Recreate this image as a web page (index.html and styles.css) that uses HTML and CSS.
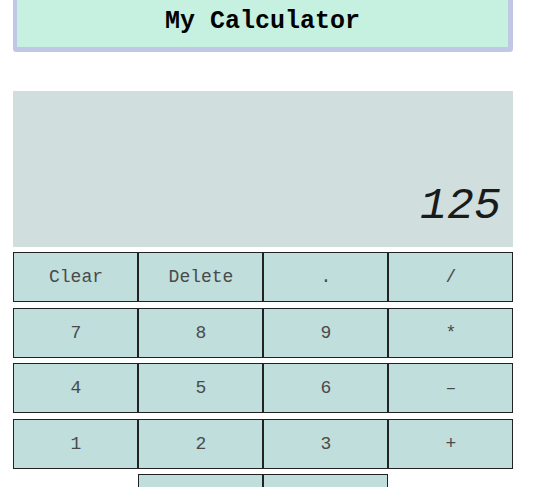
FILE: index.html
```html
<!DOCTYPE html>
<html>
<head>
<meta charset="utf-8">
<link rel="stylesheet" href="styles.css">
</head>
<body>
<div class="app">
  <header class="title-bar"><h1 class="title">My Calculator</h1></header>
  <div class="display"><span class="display-value">125</span></div>
  <div class="keys">
    <button class="key">Clear</button>
    <button class="key">Delete</button>
    <button class="key">.</button>
    <button class="key">/</button>
    <button class="key">7</button>
    <button class="key">8</button>
    <button class="key">9</button>
    <button class="key">*</button>
    <button class="key">4</button>
    <button class="key">5</button>
    <button class="key">6</button>
    <button class="key">–</button>
    <button class="key">1</button>
    <button class="key">2</button>
    <button class="key">3</button>
    <button class="key">+</button>
    <button class="key key-zero" aria-label="0"></button>
    <button class="key" aria-label="="></button>
  </div>
</div>
</body>
</html>
```
FILE: styles.css
```css
html, body {
  margin: 0;
  padding: 0;
  background: #ffffff;
  overflow: hidden;
}
.app {
  width: 500px;
  margin-left: 13px;
  display: flex;
  flex-direction: column;
}
.title-bar {
  box-sizing: border-box;
  margin-top: -10px;
  height: 62px;
  background: #c6f0e0;
  border: 5px solid #c1c8e6;
  border-left-width: 4px;
  border-radius: 3px;
  display: flex;
  align-items: center;
  justify-content: center;
}
.title {
  margin: 0;
  padding-top: 1px;
  font-family: "Liberation Mono", "Courier New", monospace;
  font-weight: bold;
  font-size: 25px;
  color: #000;
}
.display {
  box-sizing: border-box;
  margin-top: 39px;
  height: 156px;
  background: #d0dede;
  display: flex;
  align-items: flex-end;
  justify-content: flex-end;
  padding: 0 12px 18px 0;
}
.display-value {
  font-family: "Liberation Mono", "Courier New", monospace;
  font-style: italic;
  font-size: 45px;
  line-height: 1;
  color: #1a1a1a;
}
.keys {
  margin-top: 5px;
  display: grid;
  grid-template-columns: repeat(4, 125px);
  grid-auto-rows: 50px;
  row-gap: 5.5px;
}
.key {
  box-sizing: border-box;
  margin: 0;
  padding: 0 0 0 1px;
  background: #bfdedc;
  border: 1px solid #222;
  font-family: "Liberation Mono", "Courier New", monospace;
  font-size: 18px;
  color: #4a4a4a;
}
.key-zero {
  grid-column: 2;
}
```
